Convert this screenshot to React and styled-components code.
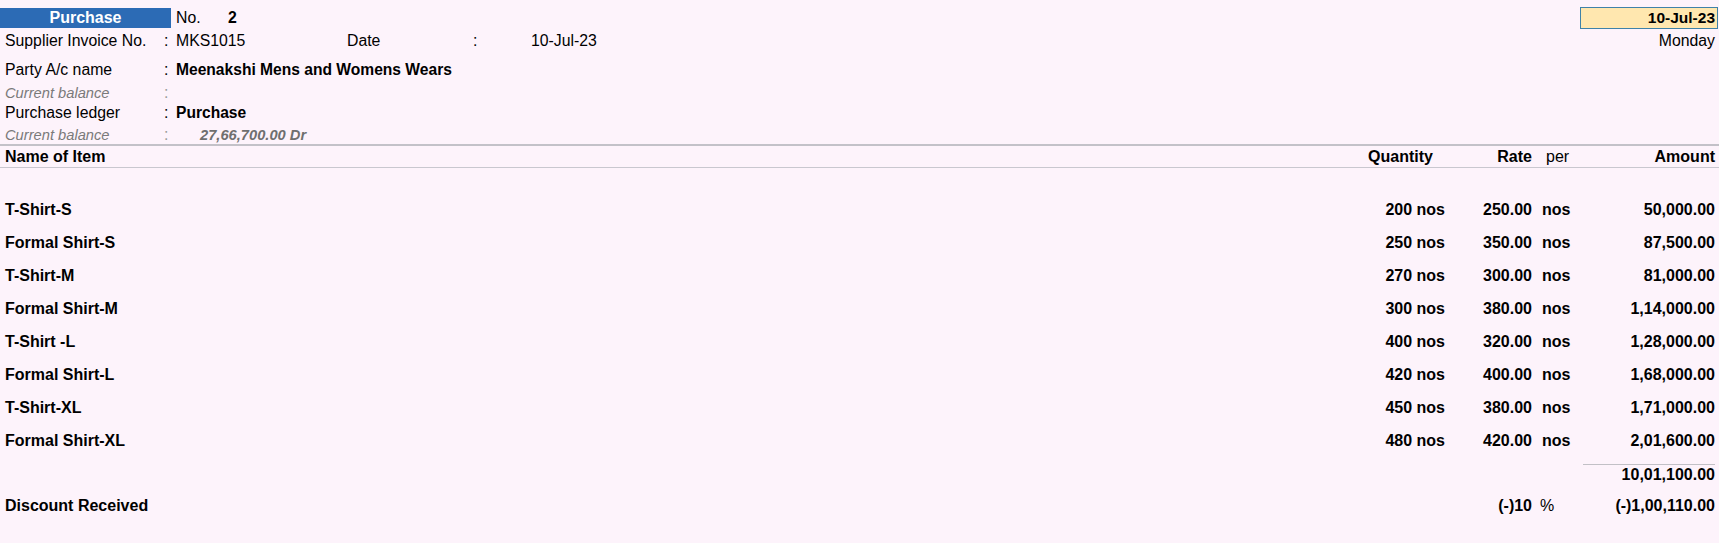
import React from "react";
import styled, { createGlobalStyle } from "styled-components";

const GlobalStyle = createGlobalStyle`
  html, body {
    margin: 0;
    padding: 0;
    background: #fdf3fb;
  }
  body {
    font-family: "Liberation Sans", Arial, sans-serif;
    color: #000;
  }
`;

const Page = styled.div`
  width: 1719px;
  height: 543px;
  background: #fdf3fb;
  padding-top: 8px;
  box-sizing: border-box;
  overflow: hidden;
  font-size: 15.8px;
`;

const TopBar = styled.div`
  display: flex;
  align-items: center;
  height: 20px;
  padding-right: 1px;
`;

const VoucherType = styled.div`
  width: 171px;
  height: 20px;
  background: #2c6bb5;
  color: #fff;
  font-weight: bold;
  font-size: 16px;
  display: flex;
  align-items: center;
  justify-content: center;
`;

const NoLabel = styled.span`
  margin-left: 5px;
  width: 52px;
`;

const Bold = styled.span`
  font-weight: bold;
`;

const DateBox = styled.div`
  margin-left: auto;
  width: 134px;
  height: 20px;
  box-sizing: content-box;
  background: #ffe7af;
  border: 1px solid #3f82a8;
  font-weight: bold;
  font-size: 15.5px;
  display: flex;
  align-items: center;
  justify-content: flex-end;
  padding-right: 2px;
`;

const InfoRow = styled.div`
  display: flex;
  align-items: center;
  height: ${(p) => p.$h}px;
  padding: 0 4px 0 5px;
  white-space: nowrap;
`;

const Label = styled.span`
  width: ${(p) => p.$w || 158}px;
  flex: none;
  ${(p) =>
    p.$muted &&
    `
    color: #7a7a7a;
    font-style: italic;
    font-size: 14.7px;
  `}
`;

const Colon = styled.span`
  width: ${(p) => p.$w || 13}px;
  flex: none;
  padding-left: 1px;
  box-sizing: border-box;
  color: ${(p) => (p.$muted ? "#9a9a9a" : "#000")};
`;

const Value = styled.span`
  width: ${(p) => (p.$w ? `${p.$w}px` : "auto")};
  flex: none;
  font-weight: ${(p) => (p.$bold ? "bold" : "normal")};
  ${(p) => p.$bold && "font-size: 15.6px;"}
  padding-left: ${(p) => p.$indent || 0}px;
  ${(p) =>
    p.$muted &&
    `
    color: #6f6f6f;
    font-style: italic;
    font-size: 14.7px;
  `}
`;

const Weekday = styled.span`
  margin-left: auto;
`;

const HeaderLine = styled.div`
  margin-top: 2px;
  height: 2px;
  background: #c3c1c8;
`;

const Grid = styled.div`
  display: grid;
  grid-template-columns: 1fr 85px 87px 51px 132px;
  align-items: center;
  height: ${(p) => p.$h}px;
  padding: 0 4px 0 5px;
  white-space: nowrap;
  font-size: 16px;
  ${(p) => p.$underline && "border-bottom: 1px solid #c9c7cf;"}
  ${(p) => p.$top && `margin-top: ${p.$top}px;`}
`;

const Cell = styled.div`
  font-weight: ${(p) => (p.$bold ? "bold" : "normal")};
  padding-left: ${(p) => p.$pl || 0}px;
  padding-right: ${(p) => p.$pr || 0}px;
  align-self: stretch;
  display: flex;
  align-items: center;
  justify-content: ${(p) =>
    p.$align === "right" ? "flex-end" : "flex-start"};
  ${(p) => p.$rule && "border-top: 1px solid #c2c0c6;"}
`;

const items = [
  { name: "T-Shirt-S", qty: "200 nos", rate: "250.00", per: "nos", amount: "50,000.00" },
  { name: "Formal Shirt-S", qty: "250 nos", rate: "350.00", per: "nos", amount: "87,500.00" },
  { name: "T-Shirt-M", qty: "270 nos", rate: "300.00", per: "nos", amount: "81,000.00" },
  { name: "Formal Shirt-M", qty: "300 nos", rate: "380.00", per: "nos", amount: "1,14,000.00" },
  { name: "T-Shirt -L", qty: "400 nos", rate: "320.00", per: "nos", amount: "1,28,000.00" },
  { name: "Formal Shirt-L", qty: "420 nos", rate: "400.00", per: "nos", amount: "1,68,000.00" },
  { name: "T-Shirt-XL", qty: "450 nos", rate: "380.00", per: "nos", amount: "1,71,000.00" },
  { name: "Formal Shirt-XL", qty: "480 nos", rate: "420.00", per: "nos", amount: "2,01,600.00" },
];

export default function App() {
  return (
    <Page>
      <GlobalStyle />
      <TopBar>
        <VoucherType>Purchase</VoucherType>
        <NoLabel>No.</NoLabel>
        <Bold>2</Bold>
        <DateBox>10-Jul-23</DateBox>
      </TopBar>

      <InfoRow $h={25}>
        <Label>Supplier Invoice No.</Label>
        <Colon>:</Colon>
        <Value $w={171}>MKS1015</Value>
        <Label $w={125}>Date</Label>
        <Colon $w={59}>:</Colon>
        <Value>10-Jul-23</Value>
        <Weekday>Monday</Weekday>
      </InfoRow>

      <InfoRow $h={34}>
        <Label>Party A/c name</Label>
        <Colon>:</Colon>
        <Value $bold>Meenakshi Mens and Womens Wears</Value>
      </InfoRow>
      <InfoRow $h={12}>
        <Label $muted>Current balance</Label>
        <Colon $muted>:</Colon>
      </InfoRow>
      <InfoRow $h={28}>
        <Label>Purchase ledger</Label>
        <Colon>:</Colon>
        <Value $bold>Purchase</Value>
      </InfoRow>
      <InfoRow $h={15}>
        <Label $muted>Current balance</Label>
        <Colon $muted>:</Colon>
        <Value $muted $bold $indent={24}>27,66,700.00 Dr</Value>
      </InfoRow>

      <HeaderLine />
      <Grid $h={21} $underline>
        <Cell $bold>Name of Item</Cell>
        <Cell $bold $align="right" $pr={12}>Quantity</Cell>
        <Cell $bold $align="right">Rate</Cell>
        <Cell $pl={14}>per</Cell>
        <Cell $bold $align="right">Amount</Cell>
      </Grid>

      {items.map((it, i) => (
        <Grid key={it.name} $h={33} $top={i === 0 ? 25 : 0}>
          <Cell $bold>{it.name}</Cell>
          <Cell $bold $align="right">{it.qty}</Cell>
          <Cell $bold $align="right">{it.rate}</Cell>
          <Cell $bold $pl={10}>{it.per}</Cell>
          <Cell $bold $align="right">{it.amount}</Cell>
        </Grid>
      ))}

      <Grid $h={21} $top={7}>
        <Cell />
        <Cell />
        <Cell />
        <Cell />
        <Cell $bold $align="right" $rule>10,01,100.00</Cell>
      </Grid>
      <Grid $h={42}>
        <Cell $bold>Discount Received</Cell>
        <Cell />
        <Cell $bold $align="right">(-)10</Cell>
        <Cell $pl={8}>%</Cell>
        <Cell $bold $align="right">(-)1,00,110.00</Cell>
      </Grid>
    </Page>
  );
}
